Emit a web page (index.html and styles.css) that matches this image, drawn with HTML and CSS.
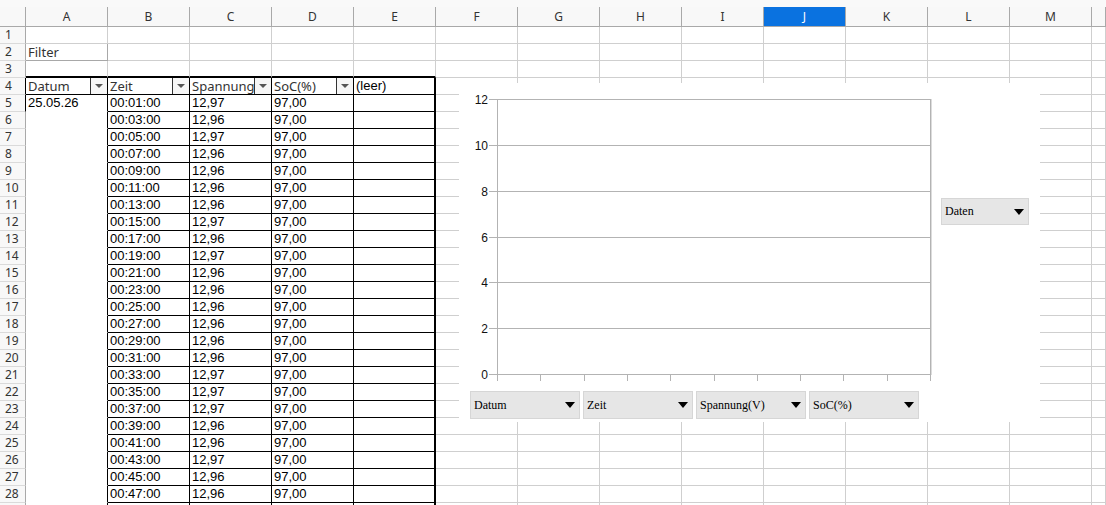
FILE: index.html
```html
<!DOCTYPE html>
<html lang="de">
<head>
    <meta charset="UTF-8">
    <title>Tabelle - Filter</title>
    <link rel="stylesheet" href="styles.css">
</head>
<body>
<div class="app">
    <div class="topbar"></div>
    <div class="row heads" id="heads"></div>
    <div id="rows"></div>

    <div class="chart">
        <svg class="plot" width="478" height="305" viewBox="0 0 478 305">
            <g class="grid">
                <line x1="38" y1="16.5" x2="472" y2="16.5"/>
                <line x1="38" y1="62.5" x2="472" y2="62.5"/>
                <line x1="38" y1="108.5" x2="472" y2="108.5"/>
                <line x1="38" y1="154.5" x2="472" y2="154.5"/>
                <line x1="38" y1="199.5" x2="472" y2="199.5"/>
                <line x1="38" y1="245.5" x2="472" y2="245.5"/>
                <line x1="38" y1="291.5" x2="472" y2="291.5"/>
                <line x1="30" y1="16.5" x2="38" y2="16.5"/>
                <line x1="30" y1="62.5" x2="38" y2="62.5"/>
                <line x1="30" y1="108.5" x2="38" y2="108.5"/>
                <line x1="30" y1="154.5" x2="38" y2="154.5"/>
                <line x1="30" y1="199.5" x2="38" y2="199.5"/>
                <line x1="30" y1="245.5" x2="38" y2="245.5"/>
                <line x1="30" y1="291.5" x2="38" y2="291.5"/>
                <line x1="38.5" y1="16" x2="38.5" y2="298"/>
                <line x1="471.5" y1="16" x2="471.5" y2="298"/>
                <line x1="472.5" y1="16" x2="472.5" y2="292" class="soft"/>
                <line x1="81.5" y1="291" x2="81.5" y2="298"/>
                <line x1="125.5" y1="291" x2="125.5" y2="298"/>
                <line x1="168.5" y1="291" x2="168.5" y2="298"/>
                <line x1="211.5" y1="291" x2="211.5" y2="298"/>
                <line x1="255.5" y1="291" x2="255.5" y2="298"/>
                <line x1="298.5" y1="291" x2="298.5" y2="298"/>
                <line x1="341.5" y1="291" x2="341.5" y2="298"/>
                <line x1="384.5" y1="291" x2="384.5" y2="298"/>
                <line x1="428.5" y1="291" x2="428.5" y2="298"/>
            </g>
            <g class="ylabels">
                <text x="29" y="21">12</text>
                <text x="29" y="67">10</text>
                <text x="29" y="113">8</text>
                <text x="29" y="159">6</text>
                <text x="29" y="204">4</text>
                <text x="29" y="250">2</text>
                <text x="29" y="296">0</text>
            </g>
        </svg>
        <div class="legend">
            <div class="field small">Daten</div>
        </div>
        <div class="fields">
            <div class="field">Datum</div>
            <div class="field">Zeit</div>
            <div class="field">Spannung(V)</div>
            <div class="field">SoC(%)</div>
        </div>
    </div>
</div>

<script>
    const letters = ['A','B','C','D','E','F','G','H','I','J','K','L','M'];
    const values = [
        ["00:01:00","12,97"], ["00:03:00","12,96"], ["00:05:00","12,97"], ["00:07:00","12,96"],
        ["00:09:00","12,96"], ["00:11:00","12,96"], ["00:13:00","12,96"], ["00:15:00","12,97"],
        ["00:17:00","12,96"], ["00:19:00","12,97"], ["00:21:00","12,96"], ["00:23:00","12,96"],
        ["00:25:00","12,96"], ["00:27:00","12,96"], ["00:29:00","12,96"], ["00:31:00","12,96"],
        ["00:33:00","12,97"], ["00:35:00","12,97"], ["00:37:00","12,97"], ["00:39:00","12,96"],
        ["00:41:00","12,96"], ["00:43:00","12,97"], ["00:45:00","12,96"], ["00:47:00","12,96"]
    ];
    const heads = ['Datum', 'Zeit', 'Spannung', 'SoC(%)'];

    const headRow = document.getElementById('heads');
    const corner = document.createElement('div');
    corner.className = 'h';
    headRow.appendChild(corner);
    letters.forEach(l => {
        const h = document.createElement('div');
        h.className = l === 'J' ? 'h sel' : 'h';
        h.textContent = l;
        headRow.appendChild(h);
    });
    const headFill = document.createElement('div');
    headFill.className = 'h';
    headRow.appendChild(headFill);

    const rowsContainer = document.getElementById('rows');

    // row 29 is only partly in view: borders without text
    for (let r = 1; r <= 29; r++) {
        const row = document.createElement('div');
        row.className = 'row';
        const v = values[r - 5];

        const rh = document.createElement('div');
        rh.className = (r === 4 || r === 5) ? 'c rh rh-dark' : 'c rh';
        if (r < 29) rh.textContent = r;
        row.appendChild(rh);

        for (let col = 0; col < 14; col++) {
            const cell = document.createElement('div');
            cell.className = 'c';

            if (r === 2 && col === 0) {
                cell.classList.add('filter');
                cell.textContent = 'Filter';
            }
            if (r === 3 && col < 5) {
                cell.classList.add('top-edge');
            }
            if (r === 4 && col < 4) {
                cell.classList.add('pv', 'label');
                const txt = document.createElement('span');
                txt.textContent = heads[col];
                const dd = document.createElement('span');
                dd.className = 'dd';
                cell.appendChild(txt);
                cell.appendChild(dd);
            }
            if (r === 4 && col === 4) {
                cell.classList.add('pv', 'pv-e');
                cell.textContent = '(leer)';
            }
            if (r >= 5 && col === 0) {
                cell.classList.add('pv-a');
                if (r === 5) cell.textContent = '25.05.26';
            }
            if (r >= 5 && col >= 1 && col <= 4) {
                cell.classList.add('pv');
                if (v && col === 1) cell.textContent = v[0];
                if (v && col === 2) cell.textContent = v[1];
                if (v && col === 3) cell.textContent = '97,00';
                if (col === 4) cell.classList.add('pv-e');
            }
            row.appendChild(cell);
        }
        rowsContainer.appendChild(row);
    }
</script>
</body>
</html>
```

FILE: styles.css
```css
* {
    box-sizing: border-box;
}
body {
    margin: 0;
    background-color: #fff;
    font-family: "Liberation Sans", Arial, sans-serif;
    font-size: 13px;
    color: #000;
}
.app {
    position: relative;
    width: 1106px;
    height: 505px;
    overflow: hidden;
}
.topbar {
    height: 7px;
    background-color: #f9f9f9;
}
.row {
    display: grid;
    grid-template-columns: 26px repeat(13, 82px) 1fr;
    height: 17px;
}
.heads {
    height: 20px;
    background-color: #f8f8f8;
}
.heads .h {
    border-right: 1px solid #a9a9a9;
    border-bottom: 1px solid #a9a9a9;
    text-align: center;
    font-family: "Noto Sans", sans-serif;
    font-size: 12px;
    line-height: 19px;
    color: #333;
}
.heads .h.sel {
    background-color: #0a72e0;
    color: #fff;
}
.c {
    border-right: 1px solid #cfcfcf;
    border-bottom: 1px solid #cfcfcf;
    padding: 0 2px;
    line-height: 16px;
    white-space: nowrap;
    overflow: hidden;
}
.rh {
    background-color: #f8f8f8;
    border-right-color: #a9a9a9;
    border-bottom-color: #dadada;
    padding-left: 5px;
    font-family: "Noto Sans", sans-serif;
    font-size: 12px;
    color: #333;
}
.rh-dark {
    border-right-color: #000;
}
.filter {
    border-right-color: #a8a8a8;
    border-bottom-color: #a8a8a8;
    font-family: "Noto Sans", sans-serif;
    color: #333;
}
.top-edge {
    border-bottom: 2px solid #000;
}
.pv {
    border-right-color: #000;
    border-bottom-color: #000;
}
.pv-a {
    border-right-color: #000;
    border-bottom-color: transparent;
}
.pv-e {
    border-right: 2px solid #000;
}
.label {
    display: flex;
    padding-right: 0;
    font-family: "Noto Sans", sans-serif;
    color: #333;
}
.label span:first-child {
    flex: 1;
    min-width: 0;
    overflow: hidden;
}
.dd {
    width: 17px;
    flex: none;
    border-left: 1px solid #333;
    background-color: #f6f6f6;
    display: flex;
    align-items: center;
    justify-content: center;
}
.dd::after {
    content: "";
    border-left: 4px solid transparent;
    border-right: 4px solid transparent;
    border-top: 4px solid #555;
}

/* chart object */
.chart {
    position: absolute;
    left: 459px;
    top: 83px;
    width: 581px;
    height: 339px;
    background-color: #fff;
    display: grid;
    grid-template-columns: 478px 1fr;
    grid-template-rows: 305px auto;
}
.plot {
    display: block;
}
.grid line {
    stroke: #b3b3b3;
    stroke-width: 1;
}
.grid line.soft {
    stroke: #dcdcdc;
}
.ylabels text {
    font-family: "Liberation Sans", Arial, sans-serif;
    font-size: 12px;
    text-anchor: end;
    fill: #111;
}
.legend {
    padding: 115px 0 0 4px;
}
.fields {
    grid-column: 1 / 3;
    display: flex;
    gap: 3px;
    padding: 3px 0 0 11px;
}
.field {
    width: 110px;
    height: 28px;
    background-color: #e6e6e6;
    border: 1px solid #d6d6d6;
    display: flex;
    align-items: center;
    justify-content: space-between;
    padding: 0 4px 0 3px;
    font-family: "Liberation Serif", "Times New Roman", serif;
    font-size: 12px;
    color: #000;
}
.field::after {
    content: "";
    border-left: 5px solid transparent;
    border-right: 5px solid transparent;
    border-top: 6px solid #000;
}
.field.small {
    width: 88px;
    height: 27px;
}
```
